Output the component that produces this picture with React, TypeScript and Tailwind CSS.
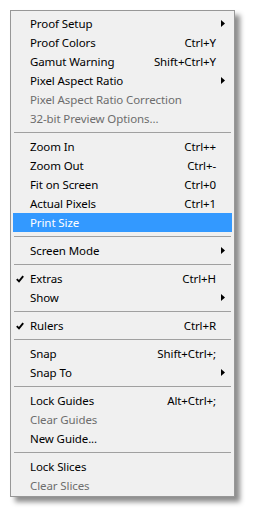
import React from "react";

type Item =
  | { sep: true }
  | {
      sep?: false;
      label: string;
      shortcut?: string;
      sub?: boolean;
      disabled?: boolean;
      checked?: boolean;
      active?: boolean;
    };

const items: Item[] = [
  { label: "Proof Setup", sub: true },
  { label: "Proof Colors", shortcut: "Ctrl+Y" },
  { label: "Gamut Warning", shortcut: "Shift+Ctrl+Y" },
  { label: "Pixel Aspect Ratio", sub: true },
  { label: "Pixel Aspect Ratio Correction", disabled: true },
  { label: "32-bit Preview Options...", disabled: true },
  { sep: true },
  { label: "Zoom In", shortcut: "Ctrl++" },
  { label: "Zoom Out", shortcut: "Ctrl+-" },
  { label: "Fit on Screen", shortcut: "Ctrl+0" },
  { label: "Actual Pixels", shortcut: "Ctrl+1" },
  { label: "Print Size", active: true },
  { sep: true },
  { label: "Screen Mode", sub: true },
  { sep: true },
  { label: "Extras", shortcut: "Ctrl+H", checked: true },
  { label: "Show", sub: true },
  { sep: true },
  { label: "Rulers", shortcut: "Ctrl+R", checked: true },
  { sep: true },
  { label: "Snap", shortcut: "Shift+Ctrl+;" },
  { label: "Snap To", sub: true },
  { sep: true },
  { label: "Lock Guides", shortcut: "Alt+Ctrl+;" },
  { label: "Clear Guides", disabled: true },
  { label: "New Guide..." },
  { sep: true },
  { label: "Lock Slices" },
  { label: "Clear Slices", disabled: true },
];

function Arrow({ white }: { white?: boolean }) {
  return (
    <svg width="4" height="7" viewBox="0 0 4 7" className="block">
      <path d="M0 0 L4 3.5 L0 7 Z" fill={white ? "#fff" : "#000"} />
    </svg>
  );
}

function Check() {
  return (
    <svg width="8" height="8" viewBox="0 0 8 8" className="block">
      <path
        d="M0.8 4.2 L3 6.4 L7.2 1.2"
        stroke="#000"
        strokeWidth="1.9"
        fill="none"
        strokeLinecap="butt"
        strokeLinejoin="miter"
      />
    </svg>
  );
}

export default function App() {
  return (
    <div className="w-[253px] h-[515px] bg-white pl-[10px] pt-[10px]">
      <div
        className="w-[225px] border border-[#979797] bg-[#f0f0f0] px-[2px] pt-[3px] pb-[1px] shadow-[5px_5px_5px_rgba(0,0,0,0.45)] text-[11.5px] tracking-[-0.1px] leading-[19px]"
        style={{ fontFamily: '"Noto Sans", "Open Sans", sans-serif' }}
      >
        {items.map((it, i) =>
          it.sep ? (
            <div key={i} className="h-[9px] flex items-center px-[1px]">
              <div className="w-full h-px bg-[#a0a0a0] -mt-[1px]" />
            </div>
          ) : (
            <div
              key={i}
              className={
                "relative h-[19px] flex items-center pl-[17px] pr-[16px] " +
                (it.active ? "bg-[#3399ff] text-white" : it.disabled ? "text-[#6d6d6d]" : "text-black")
              }
            >
              {it.checked && (
                <span className="absolute left-[3px] top-[6px]">
                  <Check />
                </span>
              )}
              <span className="flex-1 whitespace-nowrap">{it.label}</span>
              {it.shortcut && <span className="whitespace-nowrap">{it.shortcut}</span>}
              {it.sub && (
                <span className="absolute right-[7px] top-[6px]">
                  <Arrow white={it.active} />
                </span>
              )}
            </div>
          )
        )}
      </div>
    </div>
  );
}
